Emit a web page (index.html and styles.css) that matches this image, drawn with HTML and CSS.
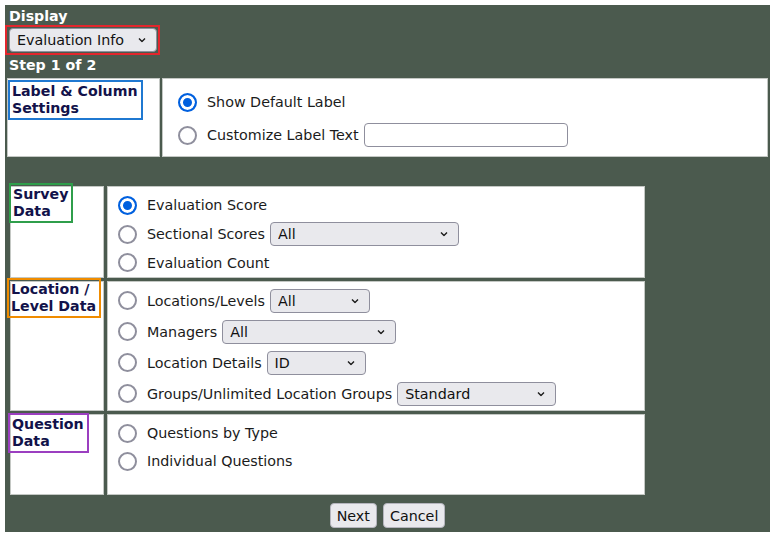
FILE: index.html
```html
<!DOCTYPE html>
<html>
<head>
<meta charset="utf-8">
<title>Display Settings</title>
<link rel="stylesheet" href="styles.css">
</head>
<body>
<div class="panel">
  <div class="heading">Display</div>
  <div class="mark-red">
    <span class="sel w148"><select><option>Evaluation Info</option></select><svg class="chev" width="8" height="5" viewBox="0 0 8 5"><path d="M1 1l3 3 3-3" fill="none" stroke="#1b1b1b" stroke-width="1.4"/></svg></span>
  </div>
  <div class="heading step">Step 1 of 2</div>

  <div class="table1">
    <div class="cell lcell1"><span class="mark mark-blue">Label &amp; Column<br>Settings</span></div>
    <div class="cell opts1">
      <label class="opt opt1"><input type="radio" name="lbl" checked><span>Show Default Label</span></label>
      <label class="opt opt1"><input type="radio" name="lbl"><span>Customize Label Text</span><input type="text" class="txt"></label>
    </div>
  </div>

  <div class="table2">
    <div class="cell"><span class="mark mark-green">Survey<br>Data</span></div>
    <div class="cell opts2 survey">
      <label class="opt"><input type="radio" name="data" checked><span>Evaluation Score</span></label>
      <label class="opt"><input type="radio" name="data"><span>Sectional Scores</span><span class="sel w189"><select><option>All</option></select><svg class="chev" width="8" height="5" viewBox="0 0 8 5"><path d="M1 1l3 3 3-3" fill="none" stroke="#1b1b1b" stroke-width="1.4"/></svg></span></label>
      <label class="opt"><input type="radio" name="data"><span>Evaluation Count</span></label>
    </div>

    <div class="cell"><span class="mark mark-orange">Location /<br>Level Data</span></div>
    <div class="cell opts2 location">
      <label class="opt"><input type="radio" name="data"><span>Locations/Levels</span><span class="sel w100"><select><option>All</option></select><svg class="chev" width="8" height="5" viewBox="0 0 8 5"><path d="M1 1l3 3 3-3" fill="none" stroke="#1b1b1b" stroke-width="1.4"/></svg></span></label>
      <label class="opt"><input type="radio" name="data"><span>Managers</span><span class="sel w174"><select><option>All</option></select><svg class="chev" width="8" height="5" viewBox="0 0 8 5"><path d="M1 1l3 3 3-3" fill="none" stroke="#1b1b1b" stroke-width="1.4"/></svg></span></label>
      <label class="opt"><input type="radio" name="data"><span>Location Details</span><span class="sel w99"><select><option>ID</option></select><svg class="chev" width="8" height="5" viewBox="0 0 8 5"><path d="M1 1l3 3 3-3" fill="none" stroke="#1b1b1b" stroke-width="1.4"/></svg></span></label>
      <label class="opt"><input type="radio" name="data"><span>Groups/Unlimited Location Groups</span><span class="sel w159"><select><option>Standard</option></select><svg class="chev" width="8" height="5" viewBox="0 0 8 5"><path d="M1 1l3 3 3-3" fill="none" stroke="#1b1b1b" stroke-width="1.4"/></svg></span></label>
    </div>

    <div class="cell"><span class="mark mark-purple">Question<br>Data</span></div>
    <div class="cell opts2 question">
      <label class="opt"><input type="radio" name="data"><span>Questions by Type</span></label>
      <label class="opt"><input type="radio" name="data"><span>Individual Questions</span></label>
    </div>
  </div>

  <div class="buttons">
    <button type="button">Next</button>
    <button type="button">Cancel</button>
  </div>
</div>
</body>
</html>
```

FILE: styles.css
```css
html, body {
  margin: 0;
  padding: 0;
  background: #ffffff;
}
body {
  padding: 5px 4px 4px 5px;
  font-family: "DejaVu Sans", Verdana, sans-serif;
  font-size: 14.3px;
  color: #1b1b1b;
}
.panel {
  background: #4b5a4e;
  padding: 3px 0 4px 0;
  display: flex;
  flex-direction: column;
  align-items: flex-start;
}
.heading {
  color: #ffffff;
  font-weight: bold;
  font-size: 14.2px;
  line-height: 16px;
  margin-left: 4px;
}
.step {
  margin-top: 2px;
}
.mark-red {
  margin-top: 1px;
  border: 2px solid #e3262d;
  padding: 1px 1px 1px 2px;
  display: flex;
}
.sel {
  position: relative;
  display: inline-flex;
  margin-left: 5px;
}
.mark-red .sel {
  margin-left: 0;
}
.sel select {
  -webkit-appearance: none;
  appearance: none;
  width: 100%;
  height: 24px;
  margin: 0;
  padding: 0 20px 0 7px;
  font-family: "DejaVu Sans", Verdana, sans-serif;
  font-size: 14.3px;
  color: #111111;
  background: #e9e9ed;
  border: 1px solid #8f8f9d;
  border-radius: 4px;
}
.chev {
  position: absolute;
  right: 11px;
  top: 50%;
  transform: translateY(-50%);
  pointer-events: none;
}
.w148 { width: 148px; }
.w189 { width: 189px; }
.w100 { width: 100px; }
.w174 { width: 174px; }
.w99 { width: 99px; }
.w159 { width: 159px; }

.cell {
  background: #ffffff;
  border: 1px solid #c4c8c4;
  box-sizing: border-box;
}
.table1 {
  margin: 5px 0 0 2px;
  width: 761px;
  height: 79px;
  display: grid;
  grid-template-columns: 153px 1fr;
  column-gap: 2px;
}
.lcell1 {
  padding-top: 1px;
}
.mark {
  display: inline-block;
  font-weight: bold;
  font-size: 14.2px;
  color: #12124a;
  line-height: 17px;
  padding: 1px 3px 1px 2px;
  border: 2px solid;
}
.mark-blue { border-color: #1f78d1; }
.mark-green { border-color: #2f9e4b; margin: -4px 0 0 -2px; }
.mark-orange { border-color: #f08c00; margin: -4px 0 0 -4px; }
.mark-purple { border-color: #9b3fc0; margin: -2px 0 0 -3px; }

.opts1 {
  padding: 10px 0 0 15px;
  display: flex;
  flex-direction: column;
  gap: 7px;
}
.opt {
  display: flex;
  align-items: center;
  white-space: nowrap;
}
.opt1 {
  height: 26px;
}
.opt input[type="radio"] {
  -webkit-appearance: none;
  appearance: none;
  width: 19px;
  height: 19px;
  margin: 0 10px 0 0;
  border: 2px solid #8f8f9d;
  border-radius: 50%;
  background: #ffffff;
  box-sizing: border-box;
  flex: none;
}
.opt input[type="radio"]:checked {
  border-color: #0060df;
  background: #0060df;
  box-shadow: inset 0 0 0 3px #ffffff;
}
.txt {
  margin: 0 0 0 5px;
  width: 204px;
  height: 24px;
  box-sizing: border-box;
  border: 1px solid #8f8f9d;
  border-radius: 4px;
  background: #ffffff;
  font-family: "DejaVu Sans", Verdana, sans-serif;
  font-size: 14px;
}

.table2 {
  margin: 29px 0 0 5px;
  width: 635px;
  display: grid;
  grid-template-columns: 94px 1fr;
  grid-template-rows: 92px 130px 81px;
  column-gap: 3px;
  row-gap: 3px;
}
.opts2 {
  padding-left: 10px;
  display: flex;
  flex-direction: column;
}
.survey { padding-top: 4px; }
.survey .opt { height: 30px; }
.location { padding-top: 3px; }
.location .opt { height: 31px; }
.question { padding-top: 4px; }
.question .opt { height: 28px; }

.buttons {
  align-self: stretch;
  margin-top: 8px;
  display: flex;
  justify-content: center;
  gap: 6px;
}
.buttons button {
  height: 25px;
  margin: 0;
  padding: 0 6px;
  font-family: "DejaVu Sans", Verdana, sans-serif;
  font-size: 14.3px;
  color: #111111;
  background: #e9e9ed;
  border: 1px solid #b5b5be;
  border-radius: 4px;
}
```
